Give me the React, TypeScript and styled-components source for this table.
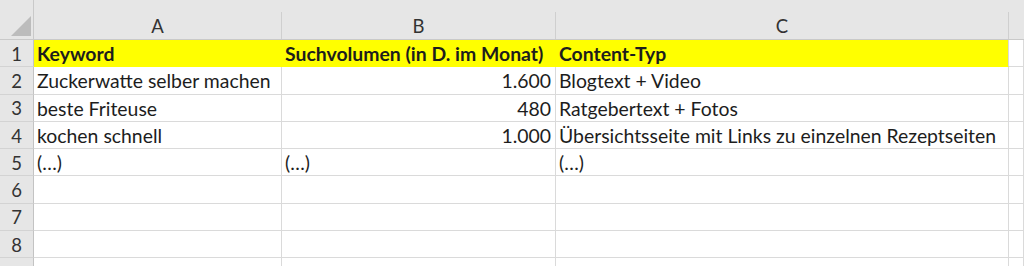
import { FC } from 'react'
import styled, { createGlobalStyle } from 'styled-components'

// Grundstile der Seite
const GlobalStyle = createGlobalStyle`
	html, body {
		margin: 0;
		padding: 0;
		background: #fff;
	}
	body {
		font-family: Lato, 'Noto Sans', 'Liberation Sans', sans-serif;
		overflow: hidden;
	}
`

const COLS = '34px 248px 274px 453px 1fr'

// Tabellenraster
const Sheet = styled.div`
	display: grid;
	grid-template-columns: ${COLS};
	grid-template-rows: 40px;
	grid-auto-rows: 27.3px;
	width: 1024px;
	height: 266px;
	overflow: hidden;
	color: #1d1d1d;
	font-size: 19.4px;
`

// Kopfzeile (A, B, C)
const ColHead = styled.div`
	background: #e6e6e6;
	border-bottom: 1px solid #c9c9c9;
	display: flex;
	flex-direction: column;
	justify-content: flex-end;
`

const ColLabel = styled.div<{ $last?: boolean }>`
	height: 27px;
	display: flex;
	align-items: center;
	justify-content: center;
	border-right: ${(p) => (p.$last ? 'none' : '1px solid #cfcfcf')};
	color: #333;
	font-size: 18.5px;
`

// linke obere Ecke mit Dreieck
const Corner = styled.div`
	background: #e6e6e6;
	border-bottom: 1px solid #c9c9c9;
	border-right: 1px solid #c9c9c9;
	display: flex;
	align-items: flex-end;
	justify-content: flex-end;
	padding: 0 2px 3px 0;
	box-sizing: border-box;

	svg {
		display: block;
	}
`

// Zeilennummern
const RowHead = styled.div`
	background: #e6e6e6;
	border-right: 1px solid #c3c3c3;
	border-bottom: 1px solid #d3d3d3;
	display: flex;
	align-items: center;
	justify-content: center;
	color: #333;
	font-size: 18.5px;
	box-sizing: border-box;
	padding-top: 1px;
`

const Cell = styled.div<{ $head?: boolean; $num?: boolean; $edge?: boolean }>`
	background: ${(p) => (p.$head ? '#ffff00' : '#fff')};
	border-right: 1px solid ${(p) => (p.$head && !p.$edge ? '#ffff00' : '#dadada')};
	border-bottom: 1px solid ${(p) => (p.$head ? '#ffff00' : '#dadada')};
	font-weight: ${(p) => (p.$head ? 700 : 400)};
	display: flex;
	align-items: center;
	justify-content: ${(p) => (p.$num ? 'flex-end' : 'flex-start')};
	padding: 1px 4px 0 3px;
	box-sizing: border-box;
	white-space: nowrap;
	overflow: hidden;
`

type Row = [string, string, string]

const rows: Row[] = [
	['Keyword', 'Suchvolumen (in D. im Monat)', 'Content-Typ'],
	['Zuckerwatte selber machen', '1.600', 'Blogtext + Video'],
	['beste Friteuse', '480', 'Ratgebertext + Fotos'],
	['kochen schnell', '1.000', 'Übersichtsseite mit Links zu einzelnen Rezeptseiten'],
	['(…)', '(…)', '(…)'],
	['', '', ''],
	['', '', ''],
	['', '', ''],
	['', '', '']
]

// nur die ersten acht Zeilen passen ganz ins Fenster
const VISIBLE_ROWS = 8

export const App: FC = () => {
	return (
		<>
			<GlobalStyle />
			<Sheet>
				<Corner>
					<svg width="20" height="20" viewBox="0 0 20 20">
						<polygon points="20,0 20,20 0,20" fill="#bcbcbc" />
					</svg>
				</Corner>
				{['A', 'B', 'C', ''].map((c, i) => (
					<ColHead key={c + i}>
						<ColLabel $last={i === 3}>{c}</ColLabel>
					</ColHead>
				))}

				{rows.map((r, i) => {
					const head = i === 0
					return [
						<RowHead key={'n' + i}>{i < VISIBLE_ROWS ? i + 1 : ''}</RowHead>,
						<Cell key={'a' + i} $head={head}>
							{r[0]}
						</Cell>,
						<Cell key={'b' + i} $head={head} $num={!head && /^[\d.]+$/.test(r[1])}>
							{r[1]}
						</Cell>,
						<Cell key={'c' + i} $head={head} $edge>
							{r[2]}
						</Cell>,
						<Cell key={'d' + i} />
					]
				})}
			</Sheet>
		</>
	)
}

export default App
